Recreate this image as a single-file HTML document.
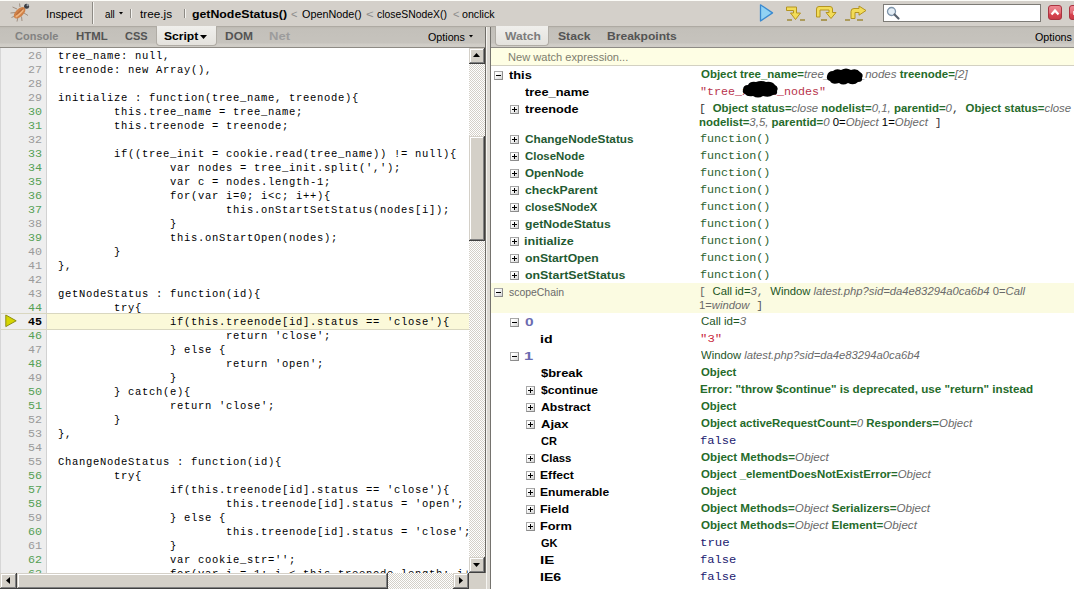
<!DOCTYPE html>
<html><head><meta charset="utf-8"><style>
*{margin:0;padding:0;box-sizing:border-box}
html,body{width:1074px;height:589px;overflow:hidden;background:#d4d0c8}
body{position:relative;font-family:"Liberation Sans",sans-serif;font-size:11px;color:#000}
.a{position:absolute;white-space:pre}
.mono{font-family:"Liberation Mono",monospace}
.tabbar{position:absolute;top:27px;height:20px;background:linear-gradient(#bdb9b2,#c3c0ba 2px,#c6c3bd 16px,#cfccc6 17px,#d0cdc7)}
.seltab{position:absolute;border:1px solid #b0aca5;border-top:none;border-radius:0 0 4px 4px;background:linear-gradient(#f0efec,#e4e2dd)}
.ln{position:absolute;font-family:"Liberation Mono",monospace;font-size:11.67px;line-height:11.67px;width:42px;text-align:right;left:0;color:#9a9a9a;white-space:pre}
.ln.g{color:#55a055}
.cl{position:absolute;font-family:"Liberation Mono",monospace;font-size:10.5px;line-height:10.5px;left:58px;color:#000;letter-spacing:0.7px;white-space:pre}
.dither{position:absolute;background:repeating-conic-gradient(#d4d0c8 0 25%,#ffffff 0 50%) 0 0/2px 2px}
.btn3d{position:absolute;background:#d4d0c8;box-shadow:inset -1px -1px #404040,inset 1px 1px #d4d0c8,inset -2px -2px #808080,inset 2px 2px #ffffff}
.tog{position:absolute;width:9px;height:9px;border:1px solid #9a9a9a;border-color:#a8a8a8 #8c8c8c #8c8c8c #a8a8a8;background:linear-gradient(135deg,#ffffff 25%,#d4d4d4);}
.tog::before{content:"";position:absolute;left:1px;top:3px;width:5px;height:1px;background:#000}
.tog.p::after{content:"";position:absolute;left:3px;top:1px;width:1px;height:5px;background:#000}
.it{font-style:italic;font-weight:normal;color:#6a6a6a}
.eq{font-weight:normal}
.bk{font-weight:normal;color:#000}
</style></head><body>

<div class="a" style="left:0;top:0;width:1074px;height:26px;background:#d4d0ca"></div>
<div class="a" style="left:0;top:0;width:1074px;height:1px;background:#fcfcf8"></div>
<div class="a" style="left:0;top:26px;width:1074px;height:1px;background:#aeaaa3"></div>
<svg class="a" style="left:8px;top:1px" width="26" height="24" viewBox="0 0 26 24">
<g stroke="#8c7664" stroke-width="0.9" fill="none" opacity="0.8">
<path d="M9 8 L4.5 6"/><path d="M7.5 11.5 L2.5 12"/><path d="M8 14.5 L3.5 16.5"/><path d="M10 16 L9 20.5"/><path d="M13.5 15.5 L14 20"/><path d="M16 12 L20 14.5"/><path d="M12 6 L11.5 2.5"/>
</g>
<ellipse cx="11.6" cy="11.8" rx="7.2" ry="3.9" transform="rotate(-44 11.6 11.8)" fill="#cf8148"/>
<ellipse cx="11.2" cy="12.2" rx="5.6" ry="1.3" transform="rotate(-44 11.6 11.8)" fill="#efb47e"/>
<ellipse cx="12.4" cy="11.0" rx="5" ry="0.7" transform="rotate(-44 11.6 11.8)" fill="#b86a38"/>
<circle cx="18.6" cy="5.2" r="2.5" fill="#3a3d44"/>
<circle cx="19.6" cy="4.2" r="1.1" fill="#9aa0a8"/>
</svg>
<div class="a" style="left:45.97px;top:9px;line-height:11px;transform:scaleX(1.0294);transform-origin:0 0;color:#000;font-family:'Liberation Sans';font-size:11px;">Inspect</div>
<div class="a" style="left:92px;top:2px;width:1px;height:22px;background:#8d8a84"></div><div class="a" style="left:93px;top:2px;width:1px;height:22px;background:#f4f3f0"></div>
<div class="a" style="left:105.00px;top:9px;line-height:11px;transform:scaleX(0.8889);transform-origin:0 0;color:#000;font-family:'Liberation Sans';font-size:11px;">all</div>
<svg class="a" style="left:119px;top:12px" width="4" height="3"><path d="M0 0H4L2 2.5z" fill="#000"/></svg>
<div class="a" style="left:130px;top:9px;width:1px;height:9px;background:#8d8a84"></div><div class="a" style="left:131px;top:9px;width:1px;height:9px;background:#f4f3f0"></div>
<div class="a" style="left:140.00px;top:9px;line-height:11px;transform:scaleX(1.0690);transform-origin:0 0;color:#000;font-family:'Liberation Sans';font-size:11px;">tree.js</div>
<div class="a" style="left:184px;top:9px;width:1px;height:9px;background:#8d8a84"></div><div class="a" style="left:185px;top:9px;width:1px;height:9px;background:#f4f3f0"></div>
<div class="a" style="left:192.00px;top:9px;line-height:11px;transform:scaleX(1.1190);transform-origin:0 0;color:#000;font-family:'Liberation Sans';font-size:11px;font-weight:bold;">getNodeStatus()</div>
<div class="a" style="left:291.00px;top:9px;line-height:11px;color:#8c8c8c;font-family:'Liberation Sans';font-size:11px;">&lt;</div>
<div class="a" style="left:302.00px;top:9px;line-height:11px;transform:scaleX(0.9831);transform-origin:0 0;color:#000;font-family:'Liberation Sans';font-size:11px;">OpenNode()</div>
<div class="a" style="left:366.00px;top:9px;line-height:11px;transform:scaleX(1.2000);transform-origin:0 0;color:#8c8c8c;font-family:'Liberation Sans';font-size:11px;">&lt;</div>
<div class="a" style="left:377.00px;top:9px;line-height:11px;transform:scaleX(0.9444);transform-origin:0 0;color:#000;font-family:'Liberation Sans';font-size:11px;">closeSNodeX()</div>
<div class="a" style="left:453.00px;top:9px;line-height:11px;color:#8c8c8c;font-family:'Liberation Sans';font-size:11px;">&lt;</div>
<div class="a" style="left:462.00px;top:9px;line-height:11px;transform:scaleX(0.9688);transform-origin:0 0;color:#000;font-family:'Liberation Sans';font-size:11px;">onclick</div>
<svg class="a" style="left:758px;top:3px" width="17" height="20" viewBox="0 0 17 20">
<path d="M2.5 1.8 L14.5 9.9 L2.5 18 Z" fill="#90d2f4" stroke="#3a8ad0" stroke-width="1.3" stroke-linejoin="round"/>
</svg>
<svg class="a" style="left:785px;top:5px" width="22" height="17" viewBox="0 0 22 17">
<path d="M1.5 2 H11.5 V8 H15.5 L10.5 14.5 L5.5 8 H8.5 V5.5 H1.5 Z" fill="#f2dc58" stroke="#b49420" stroke-width="1" stroke-linejoin="round"/>
<path d="M2 15 H7 M15 15 H20" stroke="#a08a3a" stroke-width="1.6"/>
</svg>
<svg class="a" style="left:815px;top:5px" width="23" height="17" viewBox="0 0 23 17">
<path d="M1.5 12 V4 Q1.5 1.5 4 1.5 H15 Q17.5 1.5 17.5 4 V7.5 H21 L16 13.5 L11 7.5 H14 V5 H5 V12 Z" fill="#f2dc58" stroke="#b49420" stroke-width="1" stroke-linejoin="round"/>
<path d="M6 15 H12" stroke="#a08a3a" stroke-width="1.6"/>
</svg>
<svg class="a" style="left:844px;top:5px" width="24" height="17" viewBox="0 0 24 17">
<path d="M7 13.5 V6.5 Q7 3.5 10 3.5 H15 V1 L22 5.5 L15 10.2 V7.5 H11 V13.5 Z" fill="#f2dc58" stroke="#b49420" stroke-width="1" stroke-linejoin="round"/>
<path d="M1 15 H6 M13 15 H19" stroke="#a08a3a" stroke-width="1.6"/>
</svg>
<div class="a" style="left:883px;top:4px;width:158px;height:18px;background:#fff;border:1px solid #7d7b76"></div>
<svg class="a" style="left:886px;top:6px" width="15" height="15" viewBox="0 0 15 15">
<circle cx="5.5" cy="5.5" r="4" fill="#e4eef6" stroke="#7f95aa" stroke-width="1.3"/>
<path d="M8.5 8.5 L12.5 12.5" stroke="#58626e" stroke-width="2.2" stroke-linecap="round"/>
</svg>
<svg class="a" style="left:1048px;top:5px" width="15" height="16" viewBox="0 0 15 16">
<defs><linearGradient id="rg" x1="0" y1="0" x2="0" y2="1"><stop offset="0" stop-color="#f08a94"/><stop offset="0.55" stop-color="#e06a74"/><stop offset="0.6" stop-color="#d84450"/><stop offset="1" stop-color="#c83a46"/></linearGradient></defs>
<rect x="0.5" y="0.5" width="13" height="14" rx="2.5" fill="url(#rg)" stroke="#a83440"/>
<path d="M3.5 9.5 L7 5.5 L10.5 9.5" stroke="#fff" stroke-width="2.2" fill="none"/>
</svg>
<svg class="a" style="left:1069px;top:5px" width="15" height="16" viewBox="0 0 15 16">
<rect x="0.5" y="0.5" width="13" height="14" rx="2.5" fill="url(#rg)" stroke="#a83440"/>
<path d="M4 7 H10 M4 9 H10" stroke="#fff" stroke-width="1.5"/>
</svg>
<div class="tabbar" style="left:0;width:485px"></div>
<div class="a" style="left:0;top:47px;width:485px;height:1px;background:#8e8b85"></div>
<div class="seltab" style="left:156px;top:26px;width:61px;height:20px"></div>
<div class="a" style="left:15.00px;top:31px;line-height:11px;color:#828282;font-family:'Liberation Sans';font-size:11px;font-weight:bold;">Console</div>
<div class="a" style="left:75.96px;top:31px;line-height:11px;transform:scaleX(1.0357);transform-origin:0 0;color:#545454;font-family:'Liberation Sans';font-size:11px;font-weight:bold;">HTML</div>
<div class="a" style="left:125.00px;top:31px;line-height:11px;color:#545454;font-family:'Liberation Sans';font-size:11px;font-weight:bold;">CSS</div>
<div class="a" style="left:164.00px;top:31px;line-height:11px;transform:scaleX(1.1000);transform-origin:0 0;color:#000;font-family:'Liberation Sans';font-size:11px;font-weight:bold;">Script</div>
<svg class="a" style="left:200px;top:35px" width="8" height="5"><path d="M0 0H7L3.5 4z" fill="#000"/></svg>
<div class="a" style="left:224.91px;top:31px;line-height:11px;transform:scaleX(1.0870);transform-origin:0 0;color:#545454;font-family:'Liberation Sans';font-size:11px;font-weight:bold;">DOM</div>
<div class="a" style="left:268.81px;top:31px;line-height:11px;transform:scaleX(1.1875);transform-origin:0 0;color:#9c9c9c;font-family:'Liberation Sans';font-size:11px;font-weight:bold;">Net</div>
<div class="a" style="left:428.00px;top:32px;line-height:11px;transform:scaleX(0.9730);transform-origin:0 0;color:#000;font-family:'Liberation Sans';font-size:11px;">Options</div>
<svg class="a" style="left:469px;top:35px" width="4" height="3"><path d="M0 0H4L2 2.5z" fill="#000"/></svg>
<div class="a" style="left:485px;top:27px;width:1px;height:546px;background:#6f6d68"></div>
<div class="a" style="left:486px;top:27px;width:4px;height:562px;background:#dcd9d3;border-left:1px solid #f6f5f2"></div>
<div class="a" style="left:490px;top:27px;width:1px;height:562px;background:#75736e"></div>
<div class="a" style="left:0;top:48px;width:46px;height:525px;background:#eeeeee"></div>
<div class="a" style="left:0;top:48px;width:1px;height:525px;background:#d6d6d6"></div>
<div class="a" style="left:46px;top:48px;width:1px;height:525px;background:#d2d2d2"></div>
<div class="a" style="left:47px;top:48px;width:422px;height:525px;background:#fff"></div>
<div class="a" style="left:1px;top:313px;width:468px;height:17px;border-top:1px solid #d9d7c0;border-bottom:1px solid #d9d7c0"></div>
<div class="a" style="left:47px;top:314px;width:422px;height:15px;background:#fbf9d9"></div>
<svg class="a" style="left:4px;top:314px" width="14" height="14" viewBox="0 0 14 14">
<path d="M1.8 1 L12.2 6.8 L1.8 12.6 Z" fill="#d6d600" stroke="#8e8e10" stroke-width="1" stroke-linejoin="round"/>
</svg>
<div class="a" style="left:0;top:48px;width:469px;height:525px;overflow:hidden"><div class="a" style="left:0;top:-48px;width:469px;height:600px">
<div class="ln" style="top:51px;">26</div>
<div class="cl" style="top:51px">tree_name: null,</div>
<div class="ln" style="top:65px;">27</div>
<div class="cl" style="top:65px">treenode: new Array(),</div>
<div class="ln" style="top:79px;">28</div>
<div class="ln" style="top:93px;">29</div>
<div class="cl" style="top:93px">initialize : function(tree_name, treenode){</div>
<div class="ln g" style="top:107px;">30</div>
<div class="cl" style="top:107px">        this.tree_name = tree_name;</div>
<div class="ln g" style="top:121px;">31</div>
<div class="cl" style="top:121px">        this.treenode = treenode;</div>
<div class="ln" style="top:135px;">32</div>
<div class="ln g" style="top:149px;">33</div>
<div class="cl" style="top:149px">        if((tree_init = cookie.read(tree_name)) != null){</div>
<div class="ln g" style="top:163px;">34</div>
<div class="cl" style="top:163px">                var nodes = tree_init.split(',');</div>
<div class="ln g" style="top:177px;">35</div>
<div class="cl" style="top:177px">                var c = nodes.length-1;</div>
<div class="ln g" style="top:191px;">36</div>
<div class="cl" style="top:191px">                for(var i=0; i&lt;c; i++){</div>
<div class="ln g" style="top:205px;">37</div>
<div class="cl" style="top:205px">                        this.onStartSetStatus(nodes[i]);</div>
<div class="ln" style="top:219px;">38</div>
<div class="cl" style="top:219px">                }</div>
<div class="ln g" style="top:233px;">39</div>
<div class="cl" style="top:233px">                this.onStartOpen(nodes);</div>
<div class="ln" style="top:247px;">40</div>
<div class="cl" style="top:247px">        }</div>
<div class="ln" style="top:261px;">41</div>
<div class="cl" style="top:261px">},</div>
<div class="ln" style="top:275px;">42</div>
<div class="ln" style="top:289px;">43</div>
<div class="cl" style="top:289px">getNodeStatus : function(id){</div>
<div class="ln g" style="top:303px;">44</div>
<div class="cl" style="top:303px">        try{</div>
<div class="ln" style="top:317px;color:#000;font-weight:bold;">45</div>
<div class="cl" style="top:317px">                if(this.treenode[id].status == 'close'){</div>
<div class="ln g" style="top:331px;">46</div>
<div class="cl" style="top:331px">                        return 'close';</div>
<div class="ln" style="top:345px;">47</div>
<div class="cl" style="top:345px">                } else {</div>
<div class="ln g" style="top:359px;">48</div>
<div class="cl" style="top:359px">                        return 'open';</div>
<div class="ln" style="top:373px;">49</div>
<div class="cl" style="top:373px">                }</div>
<div class="ln g" style="top:387px;">50</div>
<div class="cl" style="top:387px">        } catch(e){</div>
<div class="ln g" style="top:401px;">51</div>
<div class="cl" style="top:401px">                return 'close';</div>
<div class="ln" style="top:415px;">52</div>
<div class="cl" style="top:415px">        }</div>
<div class="ln" style="top:429px;">53</div>
<div class="cl" style="top:429px">},</div>
<div class="ln" style="top:443px;">54</div>
<div class="ln" style="top:457px;">55</div>
<div class="cl" style="top:457px">ChangeNodeStatus : function(id){</div>
<div class="ln g" style="top:471px;">56</div>
<div class="cl" style="top:471px">        try{</div>
<div class="ln g" style="top:485px;">57</div>
<div class="cl" style="top:485px">                if(this.treenode[id].status == 'close'){</div>
<div class="ln g" style="top:499px;">58</div>
<div class="cl" style="top:499px">                        this.treenode[id].status = 'open';</div>
<div class="ln" style="top:513px;">59</div>
<div class="cl" style="top:513px">                } else {</div>
<div class="ln g" style="top:527px;">60</div>
<div class="cl" style="top:527px">                        this.treenode[id].status = 'close';</div>
<div class="ln" style="top:541px;">61</div>
<div class="cl" style="top:541px">                }</div>
<div class="ln g" style="top:555px;">62</div>
<div class="cl" style="top:555px">                var cookie_str='';</div>
<div class="ln g" style="top:569px;">63</div>
<div class="cl" style="top:569px">                for(var i = 1; i &lt; this.treenode.length; i++){</div>
</div></div>
<div class="dither" style="left:469px;top:48px;width:16px;height:525px"></div>
<div class="btn3d" style="left:469px;top:48px;width:16px;height:16px"></div>
<svg class="a" style="left:473px;top:53px" width="8" height="5"><path d="M0 4H7L3.5 0z" fill="#000"/></svg>
<div class="btn3d" style="left:469px;top:136px;width:16px;height:105px"></div>
<div class="btn3d" style="left:469px;top:557px;width:16px;height:16px"></div>
<svg class="a" style="left:473px;top:563px" width="8" height="5"><path d="M0 0H7L3.5 4z" fill="#000"/></svg>
<div class="dither" style="left:0;top:573px;width:469px;height:16px"></div>
<div class="btn3d" style="left:0;top:573px;width:17px;height:16px"></div>
<svg class="a" style="left:6px;top:577px" width="5" height="8"><path d="M4 0V7L0 3.5z" fill="#000"/></svg>
<div class="btn3d" style="left:17px;top:573px;width:371px;height:16px"></div>
<div class="btn3d" style="left:453px;top:573px;width:16px;height:16px"></div>
<svg class="a" style="left:459px;top:577px" width="5" height="8"><path d="M0 0V7L4 3.5z" fill="#000"/></svg>
<div class="a" style="left:469px;top:573px;width:16px;height:16px;background:#d4d0c8"></div>
<div class="tabbar" style="left:491px;width:583px"></div>
<div class="a" style="left:491px;top:47px;width:583px;height:1px;background:#8e8b85"></div>
<div class="seltab" style="left:495px;top:26px;width:54px;height:20px"></div>
<div class="a" style="left:505.00px;top:31px;line-height:11px;transform:scaleX(1.0968);transform-origin:0 0;color:#7c7c7c;font-family:'Liberation Sans';font-size:11px;font-weight:bold;">Watch</div>
<div class="a" style="left:558.00px;top:31px;line-height:11px;transform:scaleX(1.1071);transform-origin:0 0;color:#545454;font-family:'Liberation Sans';font-size:11px;font-weight:bold;">Stack</div>
<div class="a" style="left:606.90px;top:31px;line-height:11px;transform:scaleX(1.0984);transform-origin:0 0;color:#545454;font-family:'Liberation Sans';font-size:11px;font-weight:bold;">Breakpoints</div>
<div class="a" style="left:1035.00px;top:32px;line-height:11px;transform:scaleX(0.9730);transform-origin:0 0;color:#000;font-family:'Liberation Sans';font-size:11px;">Options</div>
<div class="a" style="left:491px;top:48px;width:583px;height:541px;background:#fff"></div>
<div class="a" style="left:491px;top:48px;width:583px;height:17px;background:#fefee4"></div>
<div class="a" style="left:491px;top:65px;width:583px;height:1px;background:#d3d1c2"></div>
<div class="a" style="left:507.99px;top:52px;line-height:11px;transform:scaleX(1.0085);transform-origin:0 0;color:#7d7d6e;font-family:'Liberation Sans';font-size:11px;">New watch expression...</div>
<div class="a" style="left:491px;top:283px;width:583px;height:30px;background:#fbfbe1"></div>
<div class="tog m" style="left:494px;top:71px"></div>
<div class="a" style="left:509.00px;top:70px;line-height:11px;transform:scaleX(1.1667);transform-origin:0 0;color:#000;font-family:'Liberation Sans';font-size:11px;font-weight:bold;">this</div>
<div class="a" style="left:701.00px;top:69px;line-height:11px;transform:scaleX(1.0431);transform-origin:0 0;color:#256b2a;font-family:'Liberation Sans';font-size:11px;font-weight:bold;">Object tree_name=<span class="it">tree_xxxxx_nodes</span> treenode=<span class="it">[2]</span></div>
<div class="a" style="left:525.00px;top:87px;line-height:11px;transform:scaleX(1.1667);transform-origin:0 0;color:#000;font-family:'Liberation Sans';font-size:11px;font-weight:bold;">tree_name</div>
<div class="a" style="left:699.94px;top:87px;line-height:11px;transform:scaleX(1.0603);transform-origin:0 0;color:#b8344c;font-family:'Liberation Mono';font-size:11px;">"tree_xxxxx_nodes"</div>
<div class="tog p" style="left:510px;top:105px"></div>
<div class="a" style="left:525.00px;top:104px;line-height:11px;transform:scaleX(1.1556);transform-origin:0 0;color:#000;font-family:'Liberation Sans';font-size:11px;font-weight:bold;">treenode</div>
<div class="a" style="left:698.93px;top:101px;line-height:11px;transform:scaleX(1.0365);transform-origin:0 0;color:#256b2a;font-family:'Liberation Sans';font-size:11px;font-weight:bold;line-height:14px"><span class="mono" style="font-weight:normal;line-height:11px;color:#333">[ </span>Object status=<span class="it">close</span> nodelist=<span class="it">0,1,</span> parentid=<span class="it">0</span><span class="mono" style="font-weight:normal;line-height:11px;color:#333">, </span>Object status=<span class="it">close</span><br>nodelist=<span class="it">3,5,</span> parentid=<span class="it">0</span> <span class="bk">0=</span><span class="it">Object</span> <span class="bk">1=</span><span class="it">Object</span><span class="mono" style="font-weight:normal;line-height:11px;color:#333"> ]</span></div>
<div class="tog p" style="left:510px;top:135px"></div>
<div class="a" style="left:525.00px;top:134px;line-height:11px;transform:scaleX(1.0700);transform-origin:0 0;color:#1f5a32;font-family:'Liberation Sans';font-size:11px;font-weight:bold;">ChangeNodeStatus</div>
<div class="a" style="left:699.94px;top:134px;line-height:11px;transform:scaleX(1.0645);transform-origin:0 0;color:#2a602e;font-family:'Liberation Mono';font-size:11px;">function()</div>
<div class="tog p" style="left:510px;top:152px"></div>
<div class="a" style="left:525.00px;top:151px;line-height:11px;transform:scaleX(1.0357);transform-origin:0 0;color:#1f5a32;font-family:'Liberation Sans';font-size:11px;font-weight:bold;">CloseNode</div>
<div class="a" style="left:699.94px;top:151px;line-height:11px;transform:scaleX(1.0645);transform-origin:0 0;color:#2a602e;font-family:'Liberation Mono';font-size:11px;">function()</div>
<div class="tog p" style="left:510px;top:169px"></div>
<div class="a" style="left:525.00px;top:168px;line-height:11px;transform:scaleX(1.0556);transform-origin:0 0;color:#1f5a32;font-family:'Liberation Sans';font-size:11px;font-weight:bold;">OpenNode</div>
<div class="a" style="left:699.94px;top:168px;line-height:11px;transform:scaleX(1.0645);transform-origin:0 0;color:#2a602e;font-family:'Liberation Mono';font-size:11px;">function()</div>
<div class="tog p" style="left:510px;top:186px"></div>
<div class="a" style="left:525.00px;top:185px;line-height:11px;transform:scaleX(1.1094);transform-origin:0 0;color:#1f5a32;font-family:'Liberation Sans';font-size:11px;font-weight:bold;">checkParent</div>
<div class="a" style="left:699.94px;top:185px;line-height:11px;transform:scaleX(1.0645);transform-origin:0 0;color:#2a602e;font-family:'Liberation Mono';font-size:11px;">function()</div>
<div class="tog p" style="left:510px;top:203px"></div>
<div class="a" style="left:525.00px;top:202px;line-height:11px;transform:scaleX(1.0290);transform-origin:0 0;color:#1f5a32;font-family:'Liberation Sans';font-size:11px;font-weight:bold;">closeSNodeX</div>
<div class="a" style="left:699.94px;top:202px;line-height:11px;transform:scaleX(1.0645);transform-origin:0 0;color:#2a602e;font-family:'Liberation Mono';font-size:11px;">function()</div>
<div class="tog p" style="left:510px;top:220px"></div>
<div class="a" style="left:525.00px;top:219px;line-height:11px;transform:scaleX(1.1053);transform-origin:0 0;color:#1f5a32;font-family:'Liberation Sans';font-size:11px;font-weight:bold;">getNodeStatus</div>
<div class="a" style="left:699.94px;top:219px;line-height:11px;transform:scaleX(1.0645);transform-origin:0 0;color:#2a602e;font-family:'Liberation Mono';font-size:11px;">function()</div>
<div class="tog p" style="left:510px;top:237px"></div>
<div class="a" style="left:523.85px;top:236px;line-height:11px;transform:scaleX(1.1463);transform-origin:0 0;color:#1f5a32;font-family:'Liberation Sans';font-size:11px;font-weight:bold;">initialize</div>
<div class="a" style="left:699.94px;top:236px;line-height:11px;transform:scaleX(1.0645);transform-origin:0 0;color:#2a602e;font-family:'Liberation Mono';font-size:11px;">function()</div>
<div class="tog p" style="left:510px;top:254px"></div>
<div class="a" style="left:525.00px;top:253px;line-height:11px;transform:scaleX(1.1077);transform-origin:0 0;color:#1f5a32;font-family:'Liberation Sans';font-size:11px;font-weight:bold;">onStartOpen</div>
<div class="a" style="left:699.94px;top:253px;line-height:11px;transform:scaleX(1.0645);transform-origin:0 0;color:#2a602e;font-family:'Liberation Mono';font-size:11px;">function()</div>
<div class="tog p" style="left:510px;top:271px"></div>
<div class="a" style="left:525.00px;top:270px;line-height:11px;transform:scaleX(1.1250);transform-origin:0 0;color:#1f5a32;font-family:'Liberation Sans';font-size:11px;font-weight:bold;">onStartSetStatus</div>
<div class="a" style="left:699.94px;top:270px;line-height:11px;transform:scaleX(1.0645);transform-origin:0 0;color:#2a602e;font-family:'Liberation Mono';font-size:11px;">function()</div>
<div class="tog m" style="left:494px;top:288px"></div>
<div class="a" style="left:509.00px;top:287px;line-height:11px;transform:scaleX(0.9474);transform-origin:0 0;color:#6a6a6a;font-family:'Liberation Sans';font-size:11px;">scopeChain</div>
<div class="a" style="left:698.95px;top:284px;line-height:11px;transform:scaleX(1.0254);transform-origin:0 0;color:#1d561f;font-family:'Liberation Sans';font-size:11px;line-height:14px"><span class="mono" style="font-weight:normal;line-height:11px;color:#666">[ </span>Call id=<span class="it">3</span><span class="mono" style="font-weight:normal;line-height:11px;color:#666">, </span>Window <span class="it">latest.php?sid=da4e83294a0ca6b4</span> <span class="bk" style="color:#6a6a6a">0=</span><span class="it">Call</span><br><span class="bk" style="color:#6a6a6a">1=</span><span class="it">window</span><span class="mono" style="font-weight:normal;line-height:11px;color:#555"> ]</span></div>
<div class="tog m" style="left:510px;top:318px"></div>
<div class="a" style="left:525.00px;top:317px;line-height:11px;transform:scaleX(1.4000);transform-origin:0 0;color:#6b6bb0;font-family:'Liberation Sans';font-size:11px;font-weight:bold;">0</div>
<div class="a" style="left:701.00px;top:316px;line-height:11px;transform:scaleX(1.0476);transform-origin:0 0;color:#1d561f;font-family:'Liberation Sans';font-size:11px;">Call id=<span class="it">3</span></div>
<div class="a" style="left:539.71px;top:334px;line-height:11px;transform:scaleX(1.2857);transform-origin:0 0;color:#000;font-family:'Liberation Sans';font-size:11px;font-weight:bold;">id</div>
<div class="a" style="left:699.88px;top:334px;line-height:11px;transform:scaleX(1.1176);transform-origin:0 0;color:#c8283e;font-family:'Liberation Mono';font-size:11px;">"3"</div>
<div class="tog m" style="left:510px;top:352px"></div>
<div class="a" style="left:523.50px;top:351px;line-height:11px;transform:scaleX(1.5000);transform-origin:0 0;color:#6b6bb0;font-family:'Liberation Sans';font-size:11px;font-weight:bold;">1</div>
<div class="a" style="left:701.00px;top:350px;line-height:11px;transform:scaleX(1.0235);transform-origin:0 0;color:#1d561f;font-family:'Liberation Sans';font-size:11px;">Window <span class="it">latest.php?sid=da4e83294a0ca6b4</span></div>
<div class="a" style="left:541.00px;top:368px;line-height:11px;transform:scaleX(1.1765);transform-origin:0 0;color:#000;font-family:'Liberation Sans';font-size:11px;font-weight:bold;">$break</div>
<div class="a" style="left:701.00px;top:367px;line-height:11px;transform:scaleX(1.0303);transform-origin:0 0;color:#256b2a;font-family:'Liberation Sans';font-size:11px;font-weight:bold;">Object</div>
<div class="tog p" style="left:526px;top:386px"></div>
<div class="a" style="left:541.00px;top:385px;line-height:11px;transform:scaleX(1.0980);transform-origin:0 0;color:#000;font-family:'Liberation Sans';font-size:11px;font-weight:bold;">$continue</div>
<div class="a" style="left:699.94px;top:384px;line-height:11px;transform:scaleX(1.0577);transform-origin:0 0;color:#256b2a;font-family:'Liberation Sans';font-size:11px;font-weight:bold;">Error: "throw $continue" is deprecated, use "return" instead</div>
<div class="tog p" style="left:526px;top:403px"></div>
<div class="a" style="left:541.00px;top:402px;line-height:11px;transform:scaleX(1.1136);transform-origin:0 0;color:#000;font-family:'Liberation Sans';font-size:11px;font-weight:bold;">Abstract</div>
<div class="a" style="left:701.00px;top:401px;line-height:11px;transform:scaleX(1.0303);transform-origin:0 0;color:#256b2a;font-family:'Liberation Sans';font-size:11px;font-weight:bold;">Object</div>
<div class="tog p" style="left:526px;top:420px"></div>
<div class="a" style="left:541.00px;top:419px;line-height:11px;transform:scaleX(1.1818);transform-origin:0 0;color:#000;font-family:'Liberation Sans';font-size:11px;font-weight:bold;">Ajax</div>
<div class="a" style="left:701.00px;top:418px;line-height:11px;transform:scaleX(1.0383);transform-origin:0 0;color:#256b2a;font-family:'Liberation Sans';font-size:11px;font-weight:bold;">Object activeRequestCount=<span class="it">0</span> Responders=<span class="it">Object</span></div>
<div class="a" style="left:541.00px;top:436px;line-height:11px;color:#000;font-family:'Liberation Sans';font-size:11px;font-weight:bold;">CR</div>
<div class="a" style="left:699.90px;top:436px;line-height:11px;transform:scaleX(1.0968);transform-origin:0 0;color:#1a1a70;font-family:'Liberation Mono';font-size:11px;">false</div>
<div class="tog p" style="left:526px;top:454px"></div>
<div class="a" style="left:541.00px;top:453px;line-height:11px;transform:scaleX(1.0357);transform-origin:0 0;color:#000;font-family:'Liberation Sans';font-size:11px;font-weight:bold;">Class</div>
<div class="a" style="left:701.00px;top:452px;line-height:11px;transform:scaleX(1.0583);transform-origin:0 0;color:#256b2a;font-family:'Liberation Sans';font-size:11px;font-weight:bold;">Object Methods=<span class="it">Object</span></div>
<div class="tog p" style="left:526px;top:471px"></div>
<div class="a" style="left:539.90px;top:470px;line-height:11px;transform:scaleX(1.1034);transform-origin:0 0;color:#000;font-family:'Liberation Sans';font-size:11px;font-weight:bold;">Effect</div>
<div class="a" style="left:701.00px;top:469px;line-height:11px;transform:scaleX(1.0362);transform-origin:0 0;color:#256b2a;font-family:'Liberation Sans';font-size:11px;font-weight:bold;">Object _elementDoesNotExistError=<span class="it">Object</span></div>
<div class="tog p" style="left:526px;top:488px"></div>
<div class="a" style="left:539.90px;top:487px;line-height:11px;transform:scaleX(1.0984);transform-origin:0 0;color:#000;font-family:'Liberation Sans';font-size:11px;font-weight:bold;">Enumerable</div>
<div class="a" style="left:701.00px;top:486px;line-height:11px;transform:scaleX(1.0303);transform-origin:0 0;color:#256b2a;font-family:'Liberation Sans';font-size:11px;font-weight:bold;">Object</div>
<div class="tog p" style="left:526px;top:505px"></div>
<div class="a" style="left:539.87px;top:504px;line-height:11px;transform:scaleX(1.1304);transform-origin:0 0;color:#000;font-family:'Liberation Sans';font-size:11px;font-weight:bold;">Field</div>
<div class="a" style="left:701.00px;top:503px;line-height:11px;transform:scaleX(1.0553);transform-origin:0 0;color:#256b2a;font-family:'Liberation Sans';font-size:11px;font-weight:bold;">Object Methods=<span class="it">Object</span> Serializers=<span class="it">Object</span></div>
<div class="tog p" style="left:526px;top:522px"></div>
<div class="a" style="left:539.84px;top:521px;line-height:11px;transform:scaleX(1.1600);transform-origin:0 0;color:#000;font-family:'Liberation Sans';font-size:11px;font-weight:bold;">Form</div>
<div class="a" style="left:701.00px;top:520px;line-height:11px;transform:scaleX(1.0539);transform-origin:0 0;color:#256b2a;font-family:'Liberation Sans';font-size:11px;font-weight:bold;">Object Methods=<span class="it">Object</span> Element=<span class="it">Object</span></div>
<div class="a" style="left:541.00px;top:538px;line-height:11px;color:#000;font-family:'Liberation Sans';font-size:11px;font-weight:bold;">GK</div>
<div class="a" style="left:699.88px;top:538px;line-height:11px;transform:scaleX(1.1250);transform-origin:0 0;color:#1a1a70;font-family:'Liberation Mono';font-size:11px;">true</div>
<div class="a" style="left:539.62px;top:555px;line-height:11px;transform:scaleX(1.3750);transform-origin:0 0;color:#000;font-family:'Liberation Sans';font-size:11px;font-weight:bold;">IE</div>
<div class="a" style="left:699.90px;top:555px;line-height:11px;transform:scaleX(1.0968);transform-origin:0 0;color:#1a1a70;font-family:'Liberation Mono';font-size:11px;">false</div>
<div class="a" style="left:539.71px;top:572px;line-height:11px;transform:scaleX(1.2857);transform-origin:0 0;color:#000;font-family:'Liberation Sans';font-size:11px;font-weight:bold;">IE6</div>
<div class="a" style="left:699.90px;top:572px;line-height:11px;transform:scaleX(1.0968);transform-origin:0 0;color:#1a1a70;font-family:'Liberation Mono';font-size:11px;">false</div>
<svg class="a" style="left:824px;top:66px" width="42" height="22" viewBox="0 0 42 22"><path d="M3 10 Q4 5 9 5 Q12 2 17 4 Q22 1 27 4 Q33 2 36 6 Q40 8 38 12 Q39 16 34 16 Q30 20 24 17 Q19 20 15 17 Q8 19 6 15 Q2 14 3 10 Z" fill="#000"/></svg>
<svg class="a" style="left:740px;top:79px" width="42" height="21" viewBox="0 0 42 21"><path d="M3 11 Q3 6 8 6 Q10 2 16 3 Q21 1 26 3 Q32 2 35 6 Q39 8 37 12 Q38 16 33 16 Q29 19 23 17 Q18 20 13 17 Q7 18 5 15 Q2 14 3 11 Z" fill="#000"/></svg>
</body></html>
